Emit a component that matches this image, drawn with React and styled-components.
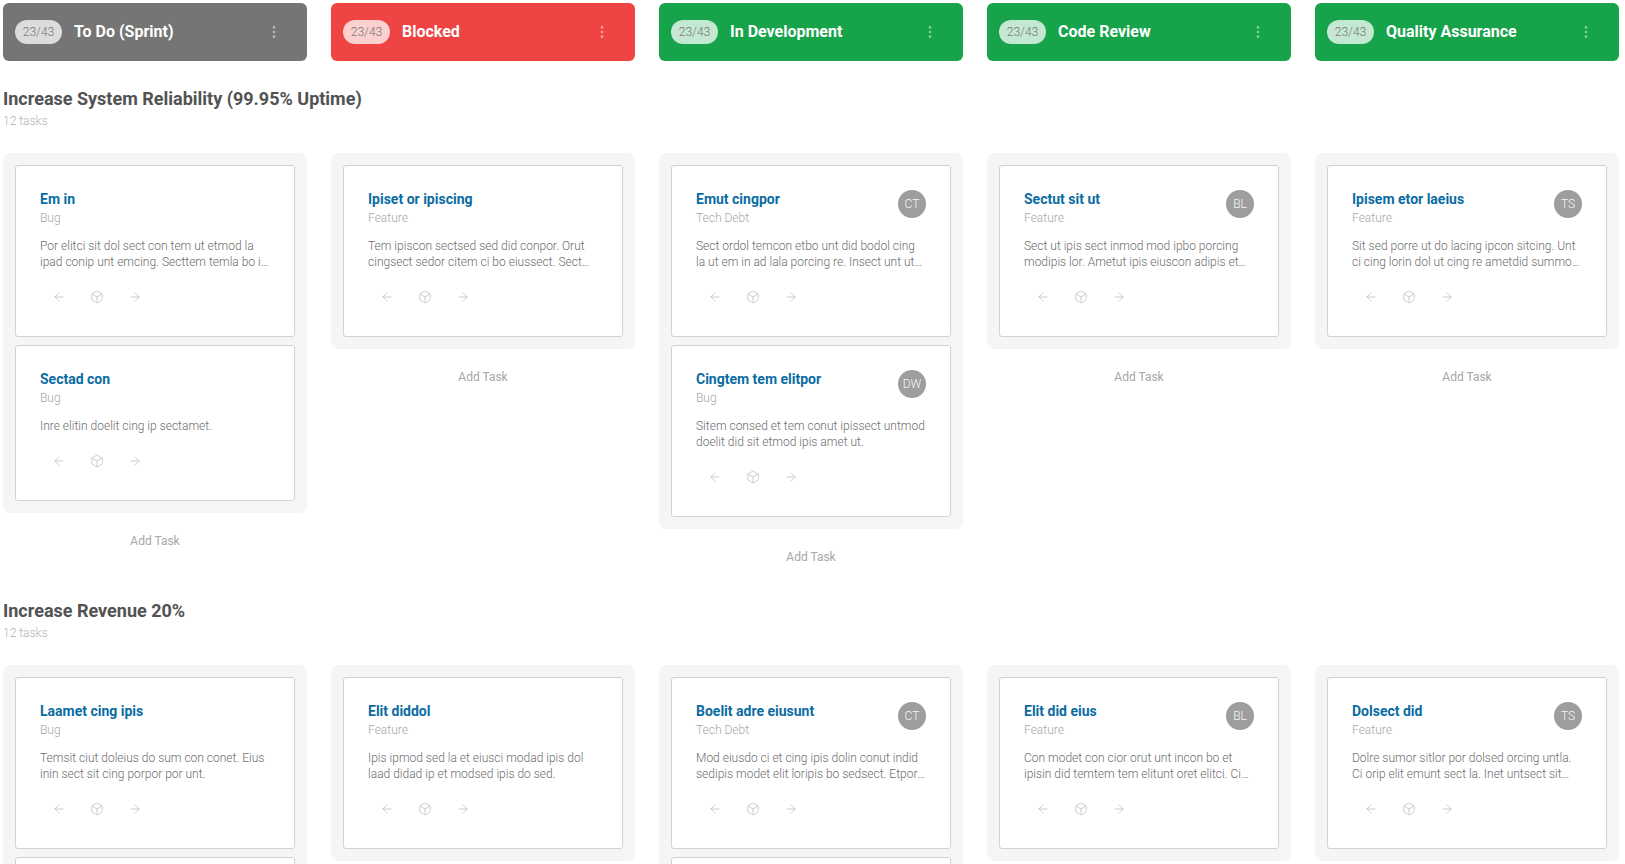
import React from "react"
import styled, { createGlobalStyle } from "styled-components"
import { MoreVertical, ArrowLeft, ArrowRight, Box } from "lucide-react"

const GlobalStyle = createGlobalStyle`
  html, body {
    margin: 0;
    height: 100%;
    overflow: hidden;
    background: #fff;
    font-family: Roboto, "Liberation Sans", sans-serif;
  }
`

const COLUMNS = [
  { title: "To Do (Sprint)", color: "#757575" },
  { title: "Blocked", color: "#ef4444" },
  { title: "In Development", color: "#16a34a" },
  { title: "Code Review", color: "#16a34a" },
  { title: "Quality Assurance", color: "#16a34a" },
]

const SWIMLANES = [
  {
    title: "Increase System Reliability (99.95% Uptime)",
    columns: [
      [
        { title: "Em in", type: "Bug", text: "Por elitci sit dol sect con tem ut etmod la ipad conip unt emcing. Secttem temla bo in ipsum dolor sit amet lorem" },
        { title: "Sectad con", type: "Bug", text: "Inre elitin doelit cing ip sectamet." },
      ],
      [
        { title: "Ipiset or ipiscing", type: "Feature", text: "Tem ipiscon sectsed sed did conpor. Orut cingsect sedor citem ci bo eiussect. Sect ipsum dolor sit amet lorem" },
      ],
      [
        { title: "Emut cingpor", type: "Tech Debt", avatar: "CT", text: "Sect ordol temcon etbo unt did bodol cing la ut em in ad lala porcing re. Insect unt ut ipsum dolor sit amet" },
        { title: "Cingtem tem elitpor", type: "Bug", avatar: "DW", text: "Sitem consed et tem conut ipissect untmod doelit did sit etmod ipis amet ut." },
      ],
      [
        { title: "Sectut sit ut", type: "Feature", avatar: "BL", text: "Sect ut ipis sect inmod mod ipbo porcing modipis lor. Ametut ipis eiuscon adipis et ipsum dolor sit amet" },
      ],
      [
        { title: "Ipisem etor laeius", type: "Feature", avatar: "TS", text: "Sit sed porre ut do lacing ipcon sitcing. Unt ci cing lorin dol ut cing re ametdid summo dolor sit amet" },
      ],
    ],
  },
  {
    title: "Increase Revenue 20%",
    columns: [
      [
        { title: "Laamet cing ipis", type: "Bug", text: "Temsit ciut doleius do sum con conet. Eius inin sect sit cing porpor por unt." },
        {},
      ],
      [
        { title: "Elit diddol", type: "Feature", text: "Ipis ipmod sed la et eiusci modad ipis dol laad didad ip et modsed ipis do sed." },
      ],
      [
        { title: "Boelit adre eiusunt", type: "Tech Debt", avatar: "CT", text: "Mod eiusdo ci et cing ipis dolin conut indid sedipis modet elit loripis bo sedsect. Etpor ipsum dolor sit amet" },
        {},
      ],
      [
        { title: "Elit did eius", type: "Feature", avatar: "BL", text: "Con modet con cior orut unt incon bo et ipisin did temtem tem elitunt oret elitci. Ci ipsum dolor sit amet" },
      ],
      [
        { title: "Dolsect did", type: "Feature", avatar: "TS", text: "Dolre sumor sitlor por dolsed orcing untla. Ci orip elit emunt sect la. Inet untsect sit ipsum dolor sit amet" },
      ],
    ],
  },
]

const Page = styled.div`
  padding: 3px 6px 0 3px;
`

const Row = styled.div`
  display: grid;
  grid-template-columns: repeat(5, 304px);
  column-gap: 24px;
  align-items: start;
`

const ColumnHeader = styled.div`
  display: flex;
  align-items: center;
  height: 58px;
  padding: 0 25px 0 12px;
  box-sizing: border-box;
  border-radius: 6px;
  background: ${props => props.color};
`

const Count = styled.span`
  display: flex;
  align-items: center;
  justify-content: center;
  width: 47px;
  height: 24px;
  border-radius: 12px;
  background: rgba(255, 255, 255, 0.75);
  color: #757575;
  font-size: 12px;
  font-weight: 300;
`

const ColumnTitle = styled.span`
  flex: 1;
  margin-left: 12px;
  padding-bottom: 2px;
  color: #fff;
  font-size: 16px;
  font-weight: 700;
`

const Menu = styled(MoreVertical)`
  width: 16px;
  height: 16px;
  color: rgba(255, 255, 255, 0.5);
`

const Lane = styled.section`
  margin-bottom: 8px;
`

const LaneHeader = styled.div`
  padding-top: 26px;
  height: 92px;
  box-sizing: border-box;
`

const LaneTitle = styled.h2`
  margin: 0;
  color: #525252;
  font-size: 18px;
  line-height: 24px;
  font-weight: 700;
`

const LaneCount = styled.div`
  margin-top: 2px;
  color: #b0b0b0;
  font-size: 12px;
  line-height: 16px;
  font-weight: 300;
`

const Pool = styled.div`
  display: flex;
  flex-direction: column;
  gap: 8px;
  padding: 12px;
  border-radius: 8px;
  background: #f5f5f5;
`

const Card = styled.article`
  position: relative;
  min-height: 156px;
  padding: 24px 24px 20px;
  box-sizing: border-box;
  border: 1px solid #d2d2d2;
  border-radius: 3px;
  background: #fff;
`

const CardTitle = styled.h3`
  margin: 0 0 2px;
  color: #0a6ca3;
  font-size: 14px;
  line-height: 18px;
  font-weight: 700;
`

const CardType = styled.div`
  color: #a8a8a8;
  font-size: 12px;
  line-height: 16px;
  font-weight: 300;
`

const CardText = styled.p`
  display: -webkit-box;
  margin: 12px 0 0;
  color: #6e6e6e;
  font-size: 12px;
  line-height: 16px;
  font-weight: 300;
  overflow: hidden;
  -webkit-box-orient: vertical;
  -webkit-line-clamp: 2;
`

const Avatar = styled.div`
  position: absolute;
  top: 24px;
  right: 24px;
  display: flex;
  align-items: center;
  justify-content: center;
  width: 28px;
  height: 28px;
  border-radius: 50%;
  background: #9e9e9e;
  color: #f5f5f5;
  font-size: 12px;
  font-weight: 300;
`

const CardActions = styled.div`
  display: flex;
  margin-top: 8px;
  height: 38px;
`

const Action = styled.span`
  display: flex;
  align-items: center;
  justify-content: center;
  width: 38px;
  height: 38px;
  color: #c6c6c6;
`

const AddTask = styled.div`
  padding-top: 20px;
  color: #a6a6a6;
  font-size: 12px;
  line-height: 16px;
  font-weight: 400;
  text-align: center;
`

const TaskCard = ({ task }) => {
  if (!task.title) return <Card />
  return (
    <Card>
      <CardTitle>{task.title}</CardTitle>
      <CardType>{task.type}</CardType>
      <CardText>{task.text}</CardText>
      <CardActions>
        <Action><ArrowLeft size={14} strokeWidth={1.5} /></Action>
        <Action><Box size={14} strokeWidth={1.5} /></Action>
        <Action><ArrowRight size={14} strokeWidth={1.5} /></Action>
      </CardActions>
      {task.avatar && <Avatar>{task.avatar}</Avatar>}
    </Card>
  )
}

export default function App() {
  return (
    <Page>
      <GlobalStyle />
      <Row>
        {COLUMNS.map(col => (
          <ColumnHeader key={col.title} color={col.color}>
            <Count>23/43</Count>
            <ColumnTitle>{col.title}</ColumnTitle>
            <Menu />
          </ColumnHeader>
        ))}
      </Row>
      {SWIMLANES.map(lane => (
        <Lane key={lane.title}>
          <LaneHeader>
            <LaneTitle>{lane.title}</LaneTitle>
            <LaneCount>12 tasks</LaneCount>
          </LaneHeader>
          <Row>
            {lane.columns.map((tasks, i) => (
              <div key={i}>
                <Pool>
                  {tasks.map((task, j) => (
                    <TaskCard key={j} task={task} />
                  ))}
                </Pool>
                <AddTask>Add Task</AddTask>
              </div>
            ))}
          </Row>
        </Lane>
      ))}
    </Page>
  )
}
